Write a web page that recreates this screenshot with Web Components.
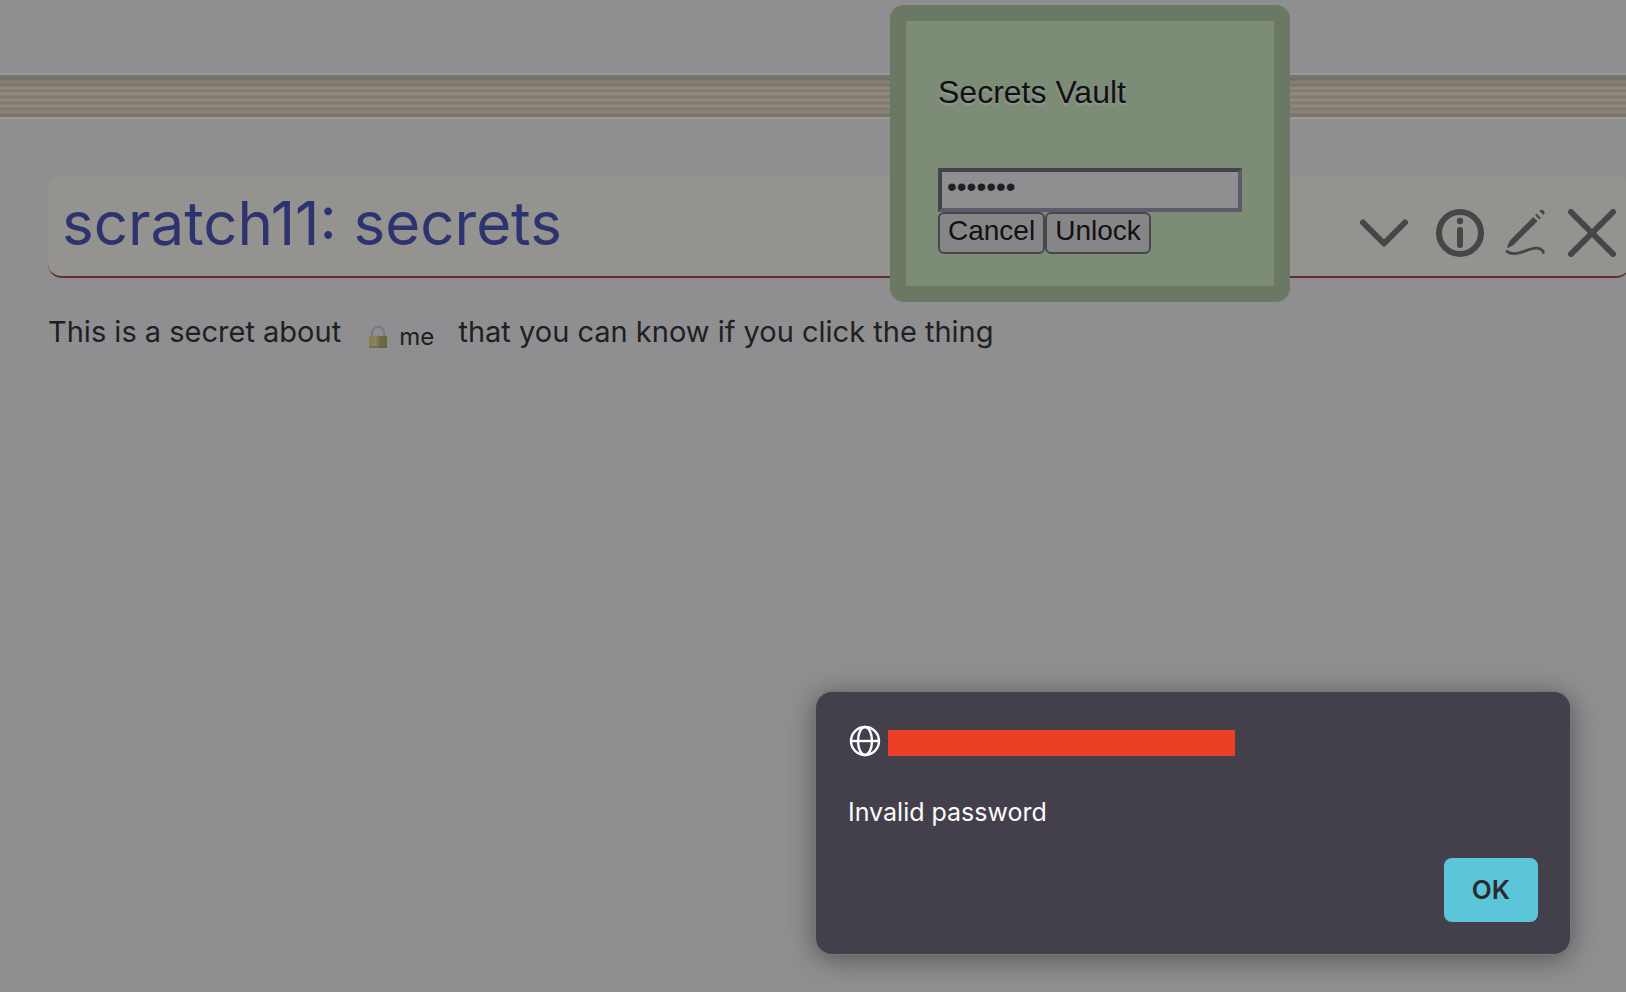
<!DOCTYPE html>
<html lang="en">
<head>
<meta charset="utf-8">
<meta name="viewport" content="width=device-width, initial-scale=1">
<title>scratch11: secrets</title>
<style>
  html, body {
    height: 100%;
  }

  body {
    margin: 0;
    overflow: hidden;
    background: #8f8f91;
    color: #202022;
    font-family: Inter, "Open Sans", sans-serif;
  }
</style>
</head>
<body>
<notebook-page>
  <notebook-divider></notebook-divider>
  <note-card heading="scratch11: secrets">
    This is a secret about <secret-link>me</secret-link> that you can know if you click the thing
  </note-card>
  <vault-dialog slot="overlay" heading="Secrets Vault"></vault-dialog>
  <alert-dialog slot="overlay">Invalid password</alert-dialog>
</notebook-page>

<script>
function define(name, html, setup) {
  const template = document.createElement('template');
  template.innerHTML = html;

  customElements.define(name, class extends HTMLElement {
    constructor() {
      super();
      this.attachShadow({ mode: 'open' });
      this.shadowRoot.appendChild(document.importNode(template.content, true));
    }

    connectedCallback() {
      if(setup) setup(this, this.shadowRoot);
    }
  });
}

function setHeading(host, root) {
  root.querySelector('.heading').textContent = host.getAttribute('heading');
}

define('notebook-page', /* html */ `
  <style>
    :host {
      display: block;
      position: relative;
      min-height: 100%;
      overflow: hidden;
    }

    main {
      display: flex;
      flex-direction: column;
      gap: 56px;
      padding-top: 73px;
    }
  </style>
  <main><slot></slot></main>
  <slot name="overlay"></slot>
`);

define('notebook-divider', /* html */ `
  <style>
    :host {
      display: block;
      height: 42px;
      border: solid #99999b;
      border-width: 2px 0;
      background:
        linear-gradient(rgba(95, 95, 98, .5), transparent 14px, transparent 34px, rgba(100, 98, 85, .4)),
        repeating-linear-gradient(#8b8a85 0 2px, #898273 2px 3px, #857a69 3px 5px, #8a8479 5px 6px);
      background-origin: padding-box;
    }
  </style>
`);

define('note-card', /* html */ `
  <style>
    :host {
      display: block;
      margin: 0 -4px 0 48px;
    }

    header {
      display: flex;
      align-items: center;
      justify-content: space-between;
      box-sizing: border-box;
      height: 103px;
      padding: 0 14px;
      border-bottom: 2px solid #632c30;
      border-radius: 14px;
      background: #949390;
    }

    h1 {
      margin: 0;
      padding-bottom: 6px;
      color: #2d336f;
      font-size: 60px;
      font-weight: 400;
      line-height: 72px;
    }

    nav {
      display: flex;
      gap: 18px;
      padding-top: 14px;
    }

    button {
      padding: 0;
      border: 0;
      background: none;
      color: #464648;
    }

    .more {
      margin-right: 10px;
    }

    svg {
      display: block;
      width: 48px;
      height: 48px;
      fill: none;
      stroke: currentColor;
      stroke-linecap: round;
      stroke-linejoin: round;
      stroke-width: 6;
    }

    p {
      margin: 32px 0 0;
      font-size: 29px;
      line-height: 44px;
    }
  </style>
  <header>
    <h1 class="heading"></h1>
    <nav>
      <button class="more" aria-label="more">
        <svg viewBox="0 0 48 48"><path d="M3 13.500 24 34.500 45 13.500"/></svg>
      </button>
      <button aria-label="info">
        <svg viewBox="0 0 48 48">
          <circle cx="24" cy="24" r="21"/>
          <path d="M24 21v15"/>
          <circle cx="24" cy="12" r="3.200" fill="currentColor" stroke="none"/>
        </svg>
      </button>
      <button aria-label="edit">
        <svg viewBox="0 0 48 48">
          <g fill="currentColor" stroke="none">
            <path d="M31.300 8 35.500 12.200 12 35.500Q9 38 5 39 6 35 8 31.500z"/>
            <path d="M33.200 6.200 34.500 4.800 38.800 9.100 37.400 10.400z"/>
            <path d="M37.200 1.800Q39.500-.3 41.800 1.700 43.500 4 41.500 6z"/>
          </g>
          <path stroke-width="2.800" d="M5 42.500C15 49 27 38 35 39.200Q41 40.200 41.300 43.500"/>
        </svg>
      </button>
      <button aria-label="close">
        <svg viewBox="0 0 48 48"><path d="M3 3 45 45M45 3 3 45"/></svg>
      </button>
    </nav>
  </header>
  <p><slot></slot></p>
`, setHeading);

define('secret-link', /* html */ `
  <style>
    :host {
      display: inline-block;
      margin: 0 16px 0 20px;
      font-size: 24px;
      line-height: 32px;
      vertical-align: -6px;
    }

    button {
      display: flex;
      align-items: center;
      gap: 12px;
      padding: 0;
      border: 0;
      background: none;
      color: inherit;
      font: inherit;
    }

    svg {
      width: 18px;
      height: 22px;
    }
  </style>
  <button>
    <svg viewBox="0 0 18 22" aria-hidden="true">
      <defs>
        <linearGradient id="brass">
          <stop offset="0" stop-color="#827d55"/>
          <stop offset=".35" stop-color="#8a8562"/>
          <stop offset=".6" stop-color="#716b47"/>
          <stop offset="1" stop-color="#69643f"/>
        </linearGradient>
      </defs>
      <path d="M3 11V7a6 6 0 0 1 12 0v4" fill="none" stroke="#737985" stroke-width="2"/>
      <rect y="10" width="18" height="12" rx="1" fill="url(#brass)"/>
      <path d="M0 21h18" stroke="#625b40"/>
    </svg>
    <slot></slot>
  </button>
`);

define('vault-dialog', /* html */ `
  <style>
    :host {
      display: block;
      position: absolute;
      top: 5px;
      right: 336px;
      box-sizing: border-box;
      width: 400px;
      padding: 50px 32px 32px;
      border: 16px solid #6b7863;
      border-radius: 14px;
      background: #7c8c77;
      color: #111;
      font-family: "Liberation Sans", Arial, sans-serif;
      font-size: 28px;
    }

    h2 {
      margin: 0 0 54px;
      font-size: 32px;
      font-weight: 400;
      line-height: 43px;
      text-shadow: 0 2px 2px #999;
    }

    input {
      display: block;
      box-sizing: border-box;
      width: 100%;
      height: 44px;
      padding: 0 5px 6px;
      border: 4px solid;
      border-color: #42424b #5d5b69 #5d5b69 #42424b;
      border-radius: 0;
      outline: 0;
      background: #8f8f91;
      color: #202022;
      font: inherit;
    }

    .actions {
      display: flex;
    }

    button {
      height: 42px;
      padding: 0 8px 4px;
      border: 2px solid #48484a;
      border-radius: 6px;
      background: #868688;
      color: inherit;
      font: inherit;
      line-height: 32px;
    }
  </style>
  <form role="dialog" aria-labelledby="title">
    <h2 id="title" class="heading"></h2>
    <input type="password" value="secrets" aria-label="Password">
    <div class="actions">
      <button type="button">Cancel</button>
      <button type="button">Unlock</button>
    </div>
  </form>
`, setHeading);

define('alert-dialog', /* html */ `
  <style>
    :host {
      display: flex;
      flex-direction: column;
      position: absolute;
      right: 56px;
      bottom: 38px;
      box-sizing: border-box;
      width: 754px;
      padding: 32px;
      border-radius: 16px;
      background: #43404b;
      box-shadow: 0 0 0 1px #777779, 0 4px 28px rgba(0, 0, 0, .45);
      color: #fbfbfe;
      font-size: 25px;
      line-height: 32px;
    }

    .origin {
      display: flex;
      align-items: center;
      gap: 7px;
      height: 34px;
      margin-bottom: 38px;
    }

    svg {
      width: 32px;
      height: 32px;
      margin-left: 1px;
      fill: none;
      stroke: currentColor;
      stroke-width: 2.400;
    }

    .redacted {
      width: 347px;
      height: 26px;
      margin-top: 4px;
      background: #eb4026;
    }

    button {
      align-self: flex-end;
      height: 64px;
      margin-top: 30px;
      padding: 0 28px;
      border: 0;
      border-radius: 8px;
      background: #5bc6d9;
      color: #2b2a33;
      font: inherit;
      font-size: 26px;
      font-weight: 600;
    }
  </style>
  <div class="origin">
    <svg viewBox="0 0 32 32" aria-hidden="true">
      <circle cx="16" cy="16" r="14"/>
      <ellipse cx="16" cy="16" rx="7" ry="14"/>
      <path d="M2 16h28"/>
    </svg>
    <span class="redacted"></span>
  </div>
  <div role="alert"><slot></slot></div>
  <button>OK</button>
`);
</script>
</body>
</html>
